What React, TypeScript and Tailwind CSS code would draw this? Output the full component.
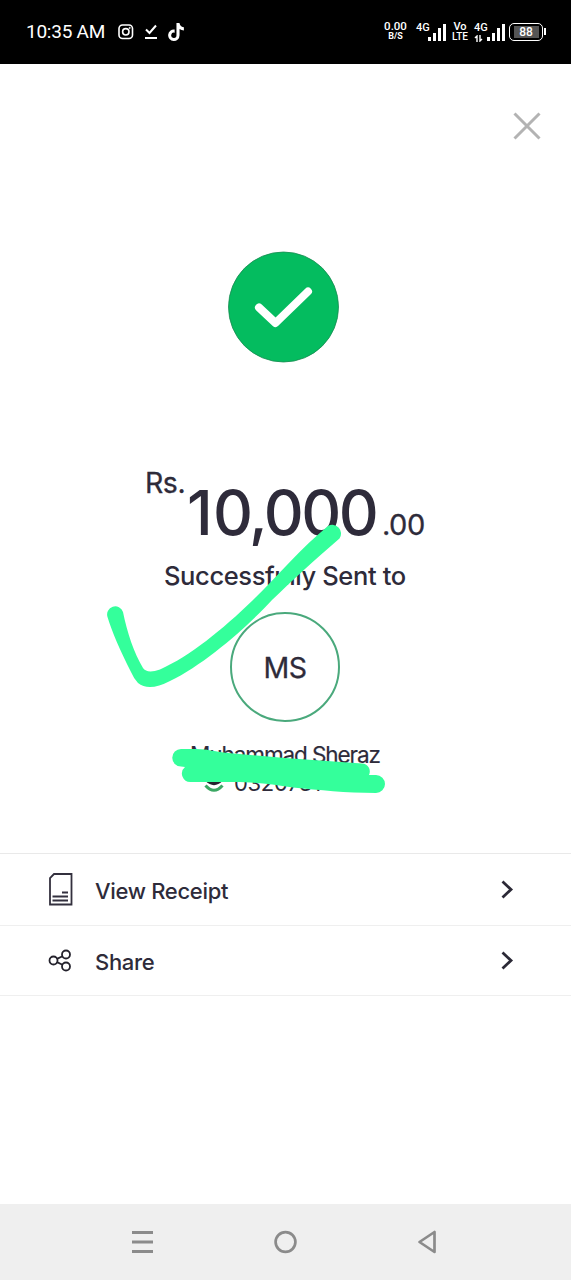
import type { ReactNode } from 'react'
import { FaTiktok } from 'react-icons/fa'

const BARS = ['h-1', 'h-2', 'h-[13px]', 'h-[17px]']

function Signal() {
  return (
    <div className="flex h-[17px] items-end gap-[2px]">
      {BARS.map((h) => (
        <span key={h} className={`w-[3px] bg-white ${h}`} />
      ))}
    </div>
  )
}

function StatusBar() {
  return (
    <header className="flex h-[63.5px] shrink-0 bg-black font-['Roboto',sans-serif] text-white">
      <span className="ml-[26px] mt-[20px] w-[92px] text-[19px] leading-6 tracking-[-0.25px] whitespace-nowrap">
        10:35 AM
      </span>
      <svg className="mt-[24px] size-4" viewBox="0 0 16 16" fill="none" stroke="white" strokeWidth="1.6">
        <rect x="1" y="1" width="13.5" height="13.5" rx="3.5" />
        <circle cx="7.8" cy="7.8" r="3.2" />
        <circle cx="11.7" cy="3.9" r="0.6" fill="white" strokeWidth="0.8" />
      </svg>
      <svg className="ml-[10px] mt-[24px] size-4" viewBox="0 0 16 16" fill="none" stroke="white" strokeWidth="2">
        <path d="M2 5.5l3.5 3.5L12 1.5M1 14h12" />
      </svg>
      <FaTiktok className="ml-[8px] mt-[22.5px] h-[18px] w-4" />

      <div className="ml-[200px] mt-[21px] flex w-[23px] flex-col items-center font-medium whitespace-nowrap">
        <span className="text-[11.5px] leading-[11px]">0.00</span>
        <span className="text-[9px] leading-[9px] font-bold">B/S</span>
      </div>
      <span className="ml-[9px] mt-[22px] w-[12px] text-[11px] leading-3 font-medium">4G</span>
      <div className="mt-[24px]">
        <Signal />
      </div>
      <div className="ml-[5px] mt-[22px] flex w-[18px] flex-col items-center text-[11px] leading-[10px] font-medium">
        <span>Vo</span>
        <span className="text-[10px]">LTE</span>
      </div>
      <div className="ml-[5px] mt-[22px] w-[13px]">
        <div className="text-[11px] leading-3 font-medium">4G</div>
        <svg className="mt-px h-[7px] w-[9px]" viewBox="0 0 9 7" fill="none" stroke="white" strokeWidth="1.4">
          <path d="M3 7V1L1 3M6 0v6l2-2" />
        </svg>
      </div>
      <div className="mt-[24px]">
        <Signal />
      </div>
      <div className="ml-[4px] mt-[22.5px] flex h-[18.5px] w-[34px] items-center justify-center rounded-[5px] border-[1.5px] border-white">
        <span className="flex h-[12px] w-[25px] items-center justify-center bg-[#555] text-[12px] font-medium">88</span>
      </div>
      <span className="ml-px mt-[28px] h-[7px] w-[1.5px] bg-white" />
    </header>
  )
}

function Row({ icon, label, className }: { icon: ReactNode; label: string; className: string }) {
  return (
    <button type="button" className={`flex w-full items-center border-b border-[#efefef] ${className}`}>
      <span className="ml-[48px] w-[47px]">{icon}</span>
      <span className="flex-1 pt-[4px] text-left text-[22px] font-medium tracking-[-0.32px]">{label}</span>
      <svg className="mr-[57px] h-5 w-[14px]" viewBox="0 0 14 20" fill="none" stroke="#2b2936" strokeWidth="2.8">
        <path d="M2.5 2.5l8.5 8-8.5 8" />
      </svg>
    </button>
  )
}

// Marker strokes drawn over the screen
function Marker() {
  return (
    <svg className="pointer-events-none absolute top-0 left-0" width="571" height="1280" fill="#34ff9b">
      <path d="M107.5 617A7.8 7.8 0 0 1 123 612C127 632 134 653 143 668Q147 674 160 669.5C190 656 222 630 253 600C277 577 301 548 328 526A8.7 8.7 0 0 1 339.5 538.5C312 562 291 582 272 600C250 624 207 663 170 681Q149 692 138 683Q134 679 131 672C120 650 112 632 107.5 617Z" />
      <path d="M181 749H196C208 749 216 752 228 753L285 758L362 763.5A8 8 0 0 1 369 775H376A9 9 0 0 1 376 793C345 793 320 790 293 787.5C270 784 250 782 235 782H191A8.5 8.5 0 0 1 185 767L181 766.5A8.75 8.75 0 0 1 181 749Z" />
    </svg>
  )
}

export default function App() {
  return (
    <main className="relative flex h-[1280px] w-[571px] flex-col overflow-hidden bg-white font-['Inter',sans-serif] text-[#2e2b3a]">
      <StatusBar />

      <div className="flex h-[187px] shrink-0 justify-end pt-[48px] pr-[30px]">
        <svg className="size-7" viewBox="0 0 28 28" fill="none" stroke="#b3b3b3" strokeWidth="3">
          <path d="M1.5 1.5l25 25M26.5 1.5l-25 25" />
        </svg>
      </div>

      <svg className="ml-[228px] size-[112px] shrink-0" viewBox="0 0 112 112" fill="none">
        <circle cx="55.5" cy="56" r="55" fill="#04bc5f" stroke="#188a50" strokeWidth="0.8" />
        <path d="M31 56.5l16.5 15.5L80 40.5" stroke="white" strokeWidth="8" strokeLinecap="round" strokeLinejoin="round" />
      </svg>

      <div className="mt-[100px] ml-[145px] flex h-[97px] shrink-0 whitespace-nowrap">
        <span className="w-[42px] text-[28.5px] leading-[40px] tracking-[-0.5px] [-webkit-text-stroke:0.3px]">Rs.</span>
        <span className="mt-[10px] w-[195px] text-[62px] leading-[80px] font-medium tracking-[-2.4px]">
          <span className="tracking-[0.2px]">1</span>0,000
        </span>
        <span className="mt-[42px] text-[29px] leading-[40px] tracking-[-0.5px] [-webkit-text-stroke:0.3px]">.00</span>
      </div>

      <h1 className="ml-[164px] h-[52px] shrink-0 text-[25.5px] leading-8 font-medium tracking-[-0.38px] whitespace-nowrap">
        Successfully Sent to
      </h1>

      <div className="ml-[230px] flex size-[110px] shrink-0 items-center justify-center rounded-full border-2 border-[#4aa97c] pt-[3px] text-[28.5px] tracking-[-0.4px] [-webkit-text-stroke:0.3px]">
        MS
      </div>

      <div className="mt-[18px] ml-[190px] h-[30px] shrink-0 text-[22.5px] leading-[30px] tracking-[-1.08px] whitespace-nowrap [-webkit-text-stroke:0.2px]">
        Muhammad Sheraz
      </div>
      <div className="ml-[203px] flex h-[83px] shrink-0 whitespace-nowrap">
        <svg className="mt-[1px] h-6 w-[22px]" viewBox="0 0 22 24" fill="none" strokeWidth="3">
          <path d="M4 8Q11 15 18 8" stroke="#24222e" strokeWidth="5" />
          <path d="M2.5 14.5Q11 24 19.5 14.5" stroke="#3ba763" />
        </svg>
        <span className="-mt-px ml-[9px] text-[22px] leading-[28px] tracking-[-0.3px]">0320731</span>
      </div>

      <nav className="border-t border-[#e9e9e9]">
        <Row
          className="h-[72px]"
          label="View Receipt"
          icon={
            <svg width="26" height="34" viewBox="0 0 26 34" fill="none" stroke="#33303e" strokeWidth="1.8">
              <path d="M6 2H23.5V32.5H2V6zM4.5 28.5H20M4.5 24.5H20M14 20.5H20" />
            </svg>
          }
        />
        <Row
          className="h-[70.5px]"
          label="Share"
          icon={
            <svg width="26" height="24" viewBox="0 0 26 24" fill="none" stroke="#24222c" strokeWidth="1.8">
              <circle cx="5.5" cy="12.5" r="4" />
              <circle cx="18" cy="6.5" r="4" />
              <circle cx="18" cy="18.5" r="4" />
              <path d="M9 10.9l5.5-2.7M9 14.1l5.5 2.7" />
            </svg>
          }
        />
      </nav>

      <footer className="mt-auto flex h-[76px] shrink-0 bg-[#efefef]">
        <svg className="mt-[24px] ml-[131px] size-7" viewBox="0 0 28 28" stroke="#8b8b8b" strokeWidth="3">
          <path d="M1 4.5H22M1 14H22M1 23.5H22" />
        </svg>
        <svg className="mt-[24px] ml-[112px] size-7" viewBox="0 0 28 28" fill="none" stroke="#8b8b8b" strokeWidth="2.7">
          <circle cx="14.5" cy="14" r="9.9" />
        </svg>
        <svg
          className="mt-[24px] ml-[114px] size-7"
          viewBox="0 0 28 28"
          fill="none"
          stroke="#8b8b8b"
          strokeWidth="2.7"
          strokeLinejoin="round"
        >
          <path d="M21.5 4v20L6.5 14z" />
        </svg>
      </footer>

      <Marker />
    </main>
  )
}
